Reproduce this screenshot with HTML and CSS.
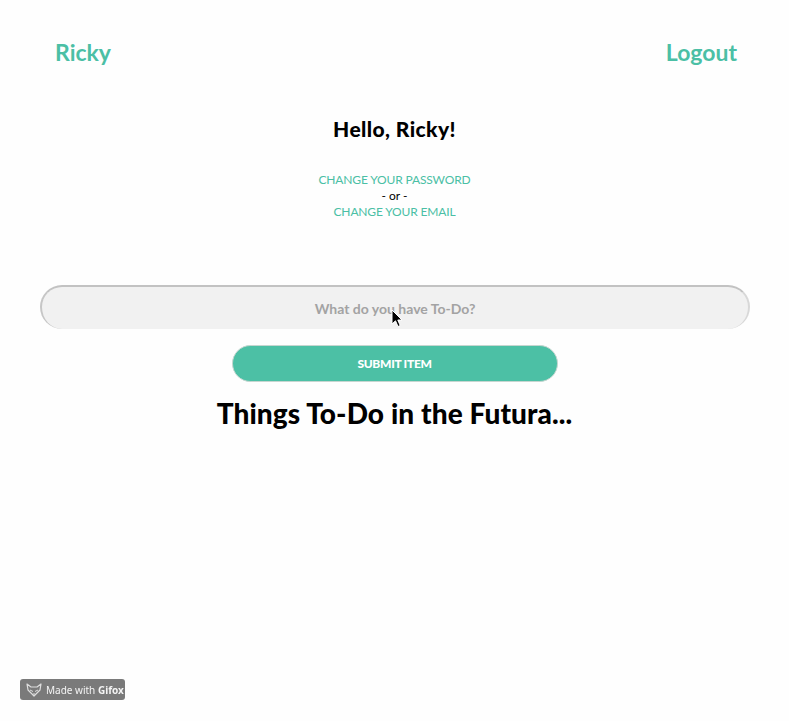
FILE: index.html
```html
<!DOCTYPE html>
<html>
<head>
<meta charset="utf-8">
<link rel="stylesheet" href="styles.css">
</head>
<body>
<header class="topbar">
  <a class="nav-link">Ricky</a>
  <a class="nav-link">Logout</a>
</header>
<main class="main">
  <h2 class="hello">Hello, Ricky!</h2>
  <div class="account">
    <a class="account-link">CHANGE YOUR PASSWORD</a>
    <span class="or">- or -</span>
    <a class="account-link">CHANGE YOUR EMAIL</a>
  </div>
  <form class="todo-form">
    <div class="input-wrap">
      <input class="todo-input" type="text" placeholder="What do you have To-Do?">
      <svg class="cursor" width="12" height="19" viewBox="0 0 12 19"><path d="M1 1 L1 15 L4.5 11.8 L7 17.5 L9.2 16.5 L6.8 11 L11 11 Z" fill="#000" stroke="#fff" stroke-width="1"/></svg>
    </div>
    <button class="submit" type="button">SUBMIT ITEM</button>
  </form>
  <h1 class="title">Things To-Do in the Futura...</h1>
</main>
<div class="badge">
  <svg class="fox" width="16" height="14" viewBox="0 0 16 14"><path d="M1 1 L5 4 L11 4 L15 1 L14 7 L8 13 L2 7 Z" fill="none" stroke="#ddd" stroke-width="1.2" stroke-linejoin="round"/><path d="M4 7 L7 8.5 M12 7 L9 8.5 M8 10 L8 12" stroke="#ddd" stroke-width="1"/></svg>
  <span>Made with <b>Gifox</b></span>
</div>
</body>
</html>
```
FILE: styles.css
```css
html, body {
  margin: 0;
  padding: 0;
  background: #fefefe;
  font-family: "Lato", "Noto Sans", sans-serif;
  color: #000;
}
.topbar {
  display: flex;
  justify-content: space-between;
  align-items: center;
  padding: 37px 52px 0 55px;
  height: 30px;
}
.nav-link {
  color: #4bbfa5;
  font-size: 23px;
  font-weight: 700;
  line-height: 30px;
}
.main {
  display: flex;
  flex-direction: column;
  align-items: center;
}
.hello {
  margin: 49px 0 0;
  font-size: 21px;
  font-weight: 900;
  line-height: 26px;
  letter-spacing: 0.4px;
}
.account {
  margin-top: 30px;
  display: flex;
  flex-direction: column;
  align-items: center;
  font-size: 12px;
  line-height: 16px;
}
.account-link {
  color: #4bbfa5;
  font-weight: 400;
  letter-spacing: -0.15px;
}
.or {
  color: #000;
}
.todo-form {
  margin-top: 65px;
  display: flex;
  flex-direction: column;
  align-items: center;
  width: 100%;
}
.input-wrap {
  position: relative;
  width: 710px;
  margin-left: 1px;
}
.todo-input {
  box-sizing: border-box;
  width: 100%;
  height: 44px;
  border-radius: 22px;
  background: #f1f1f1;
  border: 0;
  border-top: 2px solid #c2c2c2;
  border-left: 2px solid #c6c6c6;
  border-right: 2px solid #d8d8d8;
  font-family: "Lato", sans-serif;
  font-size: 14px;
  text-align: center;
  outline: none;
  padding: 0;
}
.todo-input::placeholder {
  color: #a3a3a3;
  font-weight: 700;
}
.cursor {
  position: absolute;
  left: 351px;
  top: 24px;
}
.submit {
  margin-top: 16px;
  width: 326px;
  height: 37px;
  border-radius: 19px;
  background: #4cc0a5;
  border: 1px solid #c6d6d0;
  color: #fff;
  font-family: "Lato", sans-serif;
  font-weight: 900;
  font-size: 12px;
  letter-spacing: -0.3px;
}
.title {
  margin: 14px 0 0;
  font-size: 28px;
  font-weight: 900;
  line-height: 34px;
  letter-spacing: 0.1px;
}
.badge {
  position: fixed;
  left: 20px;
  top: 679px;
  width: 105px;
  height: 21px;
  box-sizing: border-box;
  background: #7a7a7a;
  border-radius: 3px;
  display: flex;
  align-items: center;
  gap: 4px;
  padding-left: 6px;
  color: #f4f4f4;
  font-size: 10px;
  font-family: "Noto Sans", sans-serif;
}
.badge b { font-weight: 700; }
```
